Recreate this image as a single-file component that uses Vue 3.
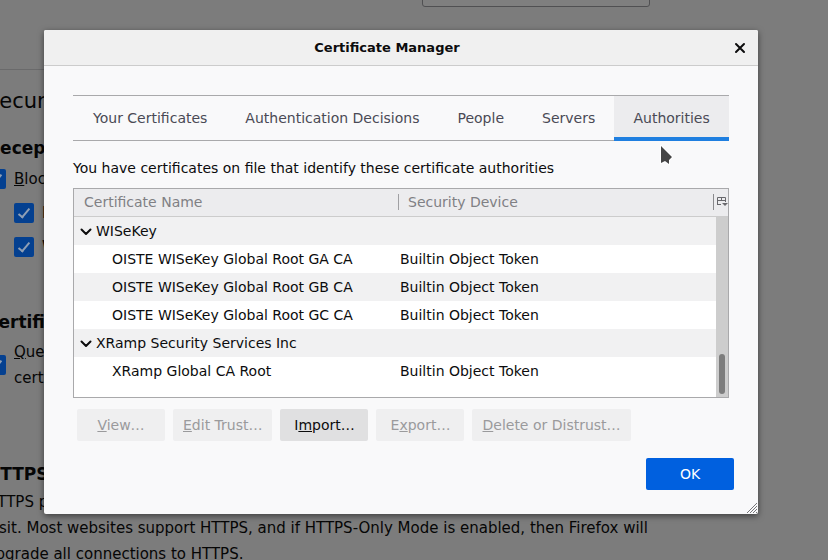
<script setup>
import { ref } from 'vue'

const tabs = ['Your Certificates', 'Authentication Decisions', 'People', 'Servers', 'Authorities']
const active = ref('Authorities')

const rows = [
  { name: 'WISeKey', group: true, shade: true },
  { name: 'OISTE WISeKey Global Root GA CA', device: 'Builtin Object Token' },
  { name: 'OISTE WISeKey Global Root GB CA', device: 'Builtin Object Token', shade: true },
  { name: 'OISTE WISeKey Global Root GC CA', device: 'Builtin Object Token' },
  { name: 'XRamp Security Services Inc', group: true, shade: true },
  { name: 'XRamp Global CA Root', device: 'Builtin Object Token' },
]

const actions = [
  { pre: '', key: 'V', post: 'iew…', disabled: true },
  { pre: '', key: 'E', post: 'dit Trust…', disabled: true },
  { pre: 'I', key: 'm', post: 'port…', disabled: false },
  { pre: 'E', key: 'x', post: 'port…', disabled: true },
  { pre: '', key: 'D', post: 'elete or Distrust…', disabled: true },
]
</script>

<template>
  <div class="window">
    <main class="prefs">
      <div class="search-row"><input class="search" type="text" aria-label="Search" /></div>
      <hr class="rule" />
      <h1>Security</h1>
      <h2>Deceptive</h2>
      <label class="check"><input type="checkbox" checked /><span><u>B</u>lock</span></label>
      <label class="check nested"><input type="checkbox" checked /><span>Block</span></label>
      <label class="check nested"><input type="checkbox" checked /><span>Warn</span></label>
      <h2 class="certs">Certificates</h2>
      <label class="check query"><input type="checkbox" checked /><span><u>Q</u>uery<br />certificates</span></label>
      <h2 class="https">HTTPS-Only</h2>
      <p class="about">HTTPS provides a secure, encrypted connection between Firefox and the websites you<br />visit. Most websites support HTTPS, and if HTTPS-Only Mode is enabled, then Firefox will<br />upgrade all connections to HTTPS.</p>
    </main>

    <div class="overlay">
      <section class="dialog" role="dialog" aria-labelledby="dialog-title">
        <header class="titlebar">
          <strong id="dialog-title">Certificate Manager</strong>
          <button class="close" aria-label="Close">
            <svg width="12" height="12" viewBox="0 0 12 12"><path d="M2 2l8 8M10 2l-8 8" stroke="#0c0c0d" stroke-width="2" stroke-linecap="round" /></svg>
          </button>
        </header>

        <div class="content">
          <nav class="tabs" role="tablist">
            <button v-for="tab in tabs" :key="tab" role="tab" class="tab" :class="{ selected: tab === active }" :aria-selected="tab === active" @click="active = tab">{{ tab }}</button>
          </nav>

          <p class="intro">You have certificates on file that identify these certificate authorities</p>

          <div class="tree">
            <table>
              <colgroup><col class="col-name" /><col /><col class="col-pick" /></colgroup>
              <thead>
                <tr>
                  <th>Certificate Name</th>
                  <th><span class="sep">Security Device</span></th>
                  <th>
                    <button class="picker" aria-label="Select columns to display">
                      <svg width="11" height="10" viewBox="0 0 11 10"><path d="M.5 8V.5h8v4.500M.5 3.500h8M4.500 .5v3M.5 7.500H4" fill="none" stroke="#68686c" /><path d="M5 6h6L8 9z" fill="#68686c" /></svg>
                    </button>
                  </th>
                </tr>
              </thead>
              <tbody>
                <tr v-for="row in rows" :key="row.name" :class="{ shade: row.shade }">
                  <td v-if="row.group" colspan="3" class="group">
                    <svg class="twisty" width="12" height="8" viewBox="0 0 12 8"><path d="M1.500 1.500L6 6l4.500-4.500" fill="none" stroke="#0c0c0d" stroke-width="2" stroke-linecap="round" stroke-linejoin="round" /></svg>{{ row.name }}
                  </td>
                  <template v-else>
                    <td class="child">{{ row.name }}</td>
                    <td colspan="2">{{ row.device }}</td>
                  </template>
                </tr>
              </tbody>
            </table>
            <div class="scrollbar"><div class="thumb"></div></div>
          </div>

          <div class="actions">
            <button v-for="a in actions" :key="a.key" class="btn" :disabled="a.disabled">{{ a.pre }}<u>{{ a.key }}</u>{{ a.post }}</button>
          </div>

          <footer><button class="btn primary">OK</button></footer>
        </div>

        <svg class="resizer" width="12" height="12" viewBox="0 0 12 12"><path d="M2 12L12 2M5 12l7-7M8 12l4-4M11 12l1-1" stroke="#77777a" stroke-width="1" /></svg>
      </section>
    </div>

    <svg class="pointer" width="14" height="22" viewBox="0 0 14 22"><path d="M1 1v17l4-2 4 3V15l3-3z" fill="#454545" stroke="#fff" stroke-width="2" paint-order="stroke" /></svg>
  </div>
</template>

<style>
body {
  margin: 0;
  background: #7c7c7c;
}
</style>

<style scoped>
.window {
  position: relative;
  height: 100vh;
  overflow: hidden;
  font: 14px/26px "DejaVu Sans", sans-serif;
  color: #060606;
}
.prefs {
  width: 664px;
  margin-left: -14px;
  font-size: 15px;
}
.search-row {
  display: flex;
  justify-content: flex-end;
  height: 7px;
  align-items: flex-end;
}
.search {
  box-sizing: border-box;
  width: 228px;
  height: 32px;
  border: 1px solid #505052;
  border-radius: 3px;
  background: #7f7f7f;
}
.rule {
  margin: 62px 0 0;
  border: 0;
  border-top: 1px solid #6a6a6b;
}
h1, h2, p {
  margin: 0;
}
h1 {
  margin-top: 15px;
  font-size: 21px;
  line-height: 32px;
  font-weight: 400;
}
h2 {
  margin-top: 17px;
  font-size: 17px;
  line-height: 28px;
}
.about {
  margin-top: 1px;
  white-space: nowrap;
}
.check {
  display: flex;
  align-items: center;
  gap: 8px;
  min-height: 34px;
}
.check input {
  appearance: none;
  flex: none;
  width: 20px;
  height: 20px;
  margin: 0;
  border-radius: 2px;
  background: #044090;
  display: grid;
  place-items: center;
}
.check input::after {
  content: "";
  width: 4px;
  height: 10px;
  margin-top: -3px;
  border: solid #8f9fb5;
  border-width: 0 2px 2px 0;
  transform: rotate(40deg);
}
.nested {
  margin-left: 28px;
}
.certs {
  margin-top: 44px;
}
.query {
  margin-top: 3px;
}
.https {
  margin-top: 69px;
}
.overlay {
  position: absolute;
  inset: 0;
  display: flex;
  align-items: flex-start;
  padding: 30px 70px 0 44px;
}
.dialog {
  position: relative;
  flex: 1;
  min-width: 0;
  background: #f9f9fa;
  border-radius: 2px;
  box-shadow: 0 2px 6px rgba(0, 0, 0, 0.5);
  line-height: 20px;
  color: #0c0c0d;
}
.titlebar {
  display: grid;
  grid-template-columns: 8px 1fr 36px;
  align-items: center;
  height: 35px;
  background: #f0f0f0;
  border-bottom: 1px solid #ccc;
  border-radius: 2px 2px 0 0;
  text-align: center;
}
.titlebar strong {
  grid-column: 2;
  font-size: 13px;
}
button {
  font: inherit;
  color: inherit;
  border: 0;
  background: none;
  padding: 0;
}
.close {
  display: grid;
  place-items: center;
  height: 32px;
}
.content {
  padding: 29px 24px 24px 29px;
}
.tabs, .intro, .tree {
  margin-right: 5px;
}
.tabs {
  display: flex;
  height: 44px;
  border: solid #a9a9ab;
  border-width: 1px 0;
}
.tab {
  padding: 0 19px;
  flex: none;
  color: #4a4a55;
  white-space: nowrap;
}
.tab:first-child {
  padding-left: 20px;
}
.tab.selected {
  flex: 1 0 auto;
  background: #ececee;
  box-shadow: 0 1px #1f7fe0, inset 0 -3px #1f7fe0;
}
.intro {
  padding: 17px 0 10px;
}
.tree {
  position: relative;
  box-sizing: border-box;
  height: 210px;
  border: 1px solid #a9a9ab;
  background: #fff;
}
table {
  width: 100%;
  border-collapse: separate;
  border-spacing: 0;
  table-layout: fixed;
}
.col-name {
  width: 324px;
}
.col-pick {
  width: 15px;
}
th {
  height: 25px;
  padding: 0 0 2px;
  background: #ececee;
  border-bottom: 1px solid #ccc;
  font-weight: 400;
  text-align: left;
  color: #808084;
}
th:first-child {
  padding-left: 10px;
}
.sep {
  display: block;
  height: 16px;
  line-height: 16px;
  padding-left: 9px;
  border-left: 1px solid #a0a0a3;
}
.picker {
  display: flex;
  align-items: center;
  height: 16px;
  width: 100%;
  padding-left: 3px;
  border-left: 1px solid #8a8a8d;
}
td {
  height: 28px;
  padding: 0 0 0 2px;
}
.shade {
  background: #f1f1f2;
}
td.group {
  padding-left: 6px;
}
td.child {
  padding-left: 38px;
}
.twisty {
  margin-right: 4px;
}
.scrollbar {
  position: absolute;
  top: 28px;
  right: 0;
  bottom: 0;
  width: 12px;
  display: flex;
  flex-direction: column;
  justify-content: flex-end;
  align-items: center;
  background: #cdcdcd;
}
.thumb {
  width: 6px;
  height: 40px;
  margin-bottom: 3px;
  border-radius: 3px;
  background: #7d7d7d;
}
.actions {
  display: flex;
  gap: 8px;
  padding: 11px 4px 17px;
}
.btn {
  min-width: 88px;
  height: 32px;
  padding: 0 10px;
  border-radius: 2px;
  background: #e0e0e1;
  white-space: nowrap;
}
.btn:disabled {
  background: #efeff0;
  color: #9a9a9c;
}
.btn.primary {
  background: #0060df;
  color: #fff;
}
footer {
  display: flex;
  justify-content: flex-end;
}
.resizer {
  position: absolute;
  right: 1px;
  bottom: 1px;
}
.pointer {
  position: absolute;
  left: 660px;
  top: 145px;
}
</style>
